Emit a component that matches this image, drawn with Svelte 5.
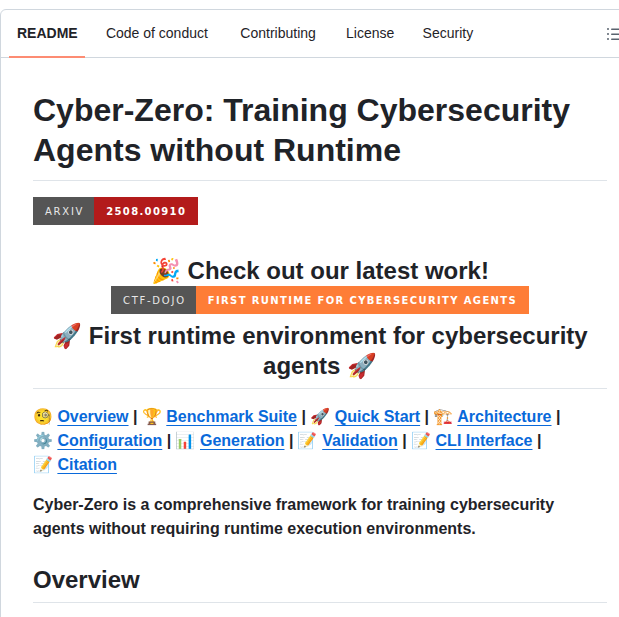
<script>
  const tabs = ['README', 'Code of conduct', 'Contributing', 'License', 'Security'];
  const links = [
    { icon: '🧐', text: 'Overview' },
    { icon: '🏆', text: 'Benchmark Suite' },
    { icon: '🚀', text: 'Quick Start' },
    { icon: '🏗️', text: 'Architecture', br: true },
    { icon: '⚙️', text: 'Configuration' },
    { icon: '📊', text: 'Generation' },
    { icon: '📝', text: 'Validation' },
    { icon: '📝', text: 'CLI Interface', br: true },
    { icon: '📝', text: 'Citation', last: true }
  ];
</script>

<section class="box">
  <nav class="tabs">
    <ul>
      {#each tabs as tab, i}
        <li class:active={i === 0}>
          <span class="sizer">{tab}</span>
          <span class="label">{tab}</span>
        </li>
      {/each}
    </ul>
    <svg class="outline" viewBox="0 0 16 16" width="16" height="16" aria-hidden="true">
      <path d="M5.75 2.5h8.5a.75.75 0 0 1 0 1.5h-8.5a.75.75 0 0 1 0-1.5Zm0 5h8.5a.75.75 0 0 1 0 1.5h-8.5a.75.75 0 0 1 0-1.5Zm0 5h8.5a.75.75 0 0 1 0 1.5h-8.5a.75.75 0 0 1 0-1.5ZM2 14a1 1 0 1 1 0-2 1 1 0 0 1 0 2Zm1-6a1 1 0 1 1-2 0 1 1 0 0 1 2 0ZM2 4a1 1 0 1 1 0-2 1 1 0 0 1 0 2Z" />
    </svg>
  </nav>

  <article>
    <h1>Cyber-Zero: Training Cybersecurity Agents without Runtime</h1>
    <div class="badge top">
      <span class="key">ARXIV</span>
      <span class="val arxiv-val">2508.00910</span>
    </div>

    <h2 class="center">
      <span class="emoji">🎉</span> Check out our latest work!
      <span class="badge dojo">
        <span class="key">CTF-DOJO</span>
        <span class="val dojo-val">FIRST RUNTIME FOR CYBERSECURITY AGENTS</span>
      </span>
      <span class="emoji">🚀</span> First runtime environment for cybersecurity agents <span class="emoji">🚀</span>
    </h2>

    <p class="nav-links">
      {#each links as link}
        <strong><span class="emoji">{link.icon}</span> <a href="#top">{link.text}</a>{#if !link.last}{' | '}{/if}</strong>{#if link.br}<br />{/if}
      {/each}
    </p>

    <p><strong>Cyber-Zero is a comprehensive framework for training cybersecurity agents without requiring runtime execution environments.</strong></p>

    <h2>Overview</h2>
  </article>
</section>

<style>
  :global(body) {
    margin: 0;
    background: #fff;
    overflow: hidden;
  }

  .box {
    box-sizing: border-box;
    width: 640px;
    margin-top: 9px;
    border: 1px solid #d0d7de;
    border-radius: 6px;
    color: #1f2328;
    font-family: "Liberation Sans", Arial, "Noto Color Emoji", sans-serif;
    font-size: 16px;
    line-height: 1.5;
  }

  .tabs {
    display: flex;
    align-items: center;
    justify-content: space-between;
    height: 47px;
    padding: 0 17px 0 8px;
    border-bottom: 1px solid #d0d7de;
  }

  ul {
    display: flex;
    gap: 8px;
    height: 100%;
    margin: 0;
    padding: 0;
    list-style: none;
  }

  li {
    position: relative;
    display: grid;
    align-items: center;
    justify-items: center;
    padding: 0 8px;
    font-size: 14px;
  }

  .sizer,
  .label {
    grid-area: 1 / 1;
  }

  .sizer {
    font-weight: 700;
    visibility: hidden;
  }

  li.active .label {
    font-weight: 700;
  }

  li.active::after {
    content: "";
    position: absolute;
    left: 0;
    right: 0.5px;
    bottom: -1px;
    height: 2px;
    background: #fd8c73;
  }

  .outline {
    flex: none;
    fill: #59636e;
  }

  article {
    padding: 32px;
  }

  h1,
  h2 {
    margin: 24px 0 16px;
    padding-bottom: 0.3em;
    border-bottom: 1px solid #d1d9e0b3;
    font-weight: 600;
    line-height: 1.25;
  }

  h1 {
    margin-top: 0;
    font-size: 32px;
  }

  h2 {
    font-size: 24px;
  }

  .center {
    text-align: center;
  }

  .emoji {
    font-family: "Noto Color Emoji", sans-serif;
    font-weight: 400;
  }

  p {
    margin: 0 0 16px;
  }

  a {
    color: #0969da;
    text-decoration: underline;
    text-underline-offset: 0.2rem;
  }

  .badge {
    display: flex;
    width: fit-content;
    height: 28px;
    font-family: "DejaVu Sans", Verdana, sans-serif;
    font-size: 10px;
    line-height: 30px;
    color: #fff;
    white-space: nowrap;
  }

  .top {
    margin-bottom: 31px;
  }

  .dojo {
    margin: 0 auto 7px;
  }

  .key {
    padding: 0 10px 0 12px;
    font-weight: 400;
    letter-spacing: 1.75px;
    color: #e8e8e8;
    background: #555;
  }

  .val {
    padding: 0 12px;
    font-weight: 700;
    letter-spacing: 1.36px;
  }

  .arxiv-val {
    background: #b31b1b;
  }

  .dojo-val {
    background: #fe7d37;
  }
</style>
